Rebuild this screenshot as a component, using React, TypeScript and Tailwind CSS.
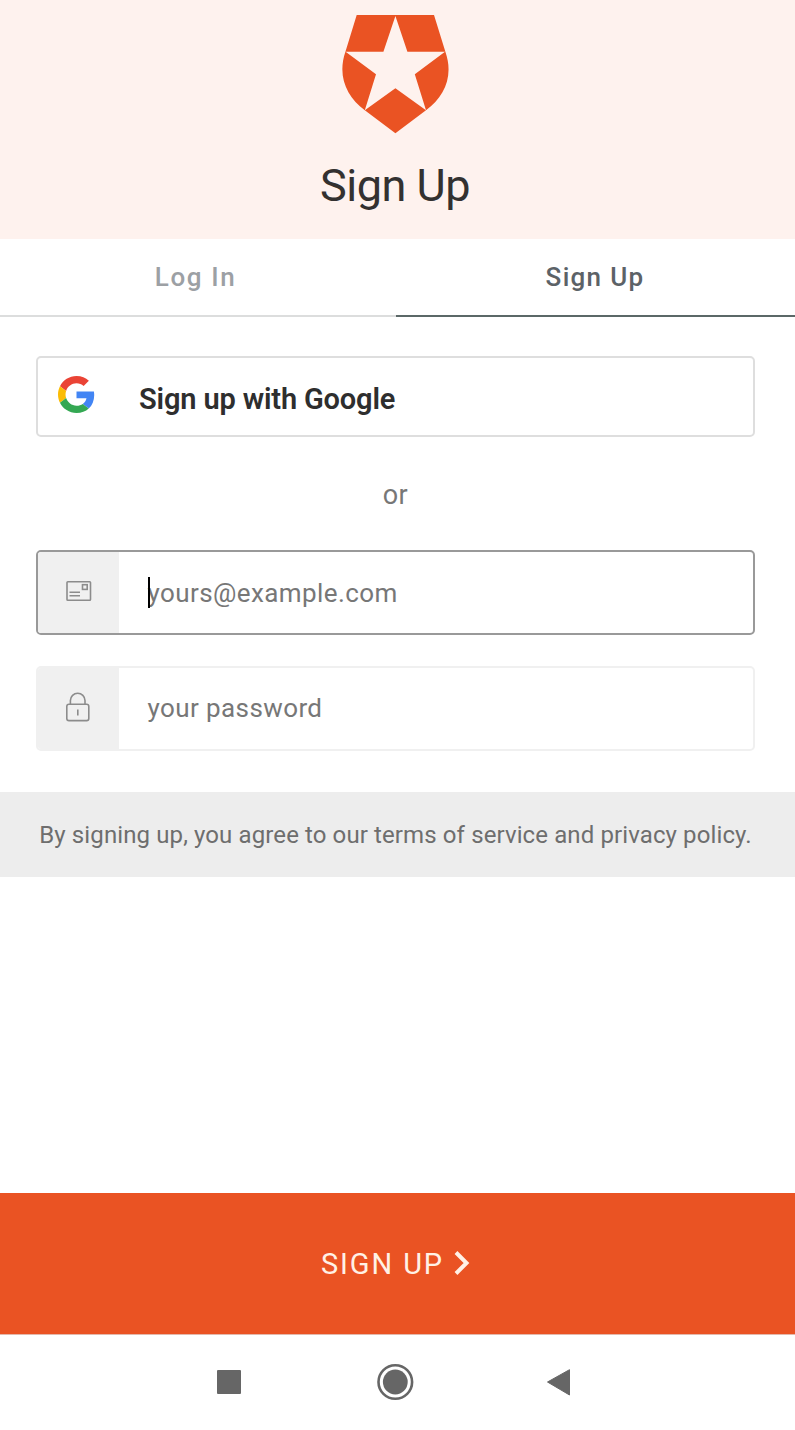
import React from "react";

function ShieldLogo() {
  return (
    <svg width="108" height="120" viewBox="341 14 108 120" className="block shrink-0">
      <path
        d="M356.7 15H434L445.3 51.5C454 76 444.5 96.5 426 110.3L395.4 133.3L364.8 110.3C346.5 96.5 337 76 345.5 51.5Z"
        fill="#ea5323"
      />
      <path
        d="M395.4 16L407.4 51.7H445L414.8 74.3L426 110.3L395.4 88.3L364.8 110.3L376 74.3L345.6 51.7H383.4Z"
        fill="#fef2ee"
      />
    </svg>
  );
}

function GoogleIcon() {
  return (
    <svg width="37" height="37" viewBox="0 0 48 48" preserveAspectRatio="none" className="block shrink-0">
      <path fill="#EA4335" d="M24 9.5c3.54 0 6.71 1.22 9.21 3.6l6.85-6.85C35.9 2.38 30.47 0 24 0 14.62 0 6.51 5.38 2.56 13.22l7.98 6.19C12.43 13.72 17.74 9.5 24 9.5z" />
      <path fill="#4285F4" d="M46.98 24.55c0-1.57-.15-3.09-.38-4.55H24v9.02h12.94c-.58 2.96-2.26 5.48-4.78 7.18l7.73 6c4.51-4.18 7.09-10.36 7.09-17.65z" />
      <path fill="#FBBC05" d="M10.53 28.59c-.48-1.45-.76-2.99-.76-4.59s.27-3.14.76-4.59l-7.98-6.19C.92 16.46 0 20.12 0 24c0 3.88.92 7.54 2.56 10.78l7.97-6.19z" />
      <path fill="#34A853" d="M24 48c6.48 0 11.93-2.13 15.89-5.81l-7.73-6c-2.15 1.45-4.92 2.3-8.16 2.3-6.26 0-11.57-4.22-13.47-9.91l-7.98 6.19C6.51 42.62 14.62 48 24 48z" />
    </svg>
  );
}

function MailIcon() {
  return (
    <svg width="26" height="22" viewBox="0 0 26 22" fill="none" stroke="#8c8c8c" strokeWidth="1.6" className="mb-[4px] block">
      <rect x="1" y="1.7" width="23.5" height="18.6" rx="0.8" />
      <rect x="16.5" y="4.7" width="4.7" height="4.7" />
      <path d="M3.5 12.2H14M3.5 15.8H14" />
    </svg>
  );
}

function LockIcon() {
  return (
    <svg width="26" height="30" viewBox="0 0 26 30" fill="none" stroke="#8c8c8c" strokeWidth="1.6" className="mb-[3px] mr-[1px] block">
      <rect x="1.8" y="12.2" width="22" height="16.4" rx="2.2" />
      <path d="M5.4 12V8.6C5.4 4.4 8.7 1.2 12.7 1.2S20 4.4 20 8.6V12M12.8 17.5V23.5" />
    </svg>
  );
}

export default function App() {
  return (
    <div className="flex h-[1430px] w-[795px] flex-col overflow-hidden bg-white font-['Roboto',sans-serif]">
      <header className="flex h-[239px] shrink-0 flex-col items-center bg-[#fef2ee] pr-[5px] pt-[14px]">
        <ShieldLogo />
        <h1 className="mt-[26px] text-[45px] leading-[52px] tracking-[-0.5px] text-[#333130]">Sign Up</h1>
      </header>

      <nav className="flex h-[78px] shrink-0 text-[26px] font-medium">
        <div className="flex w-[396px] items-center justify-center border-b-2 border-[#dcdddd] pr-[5px] tracking-[1.6px] text-[#9ca0a4]">
          Log In
        </div>
        <div className="flex flex-1 items-center justify-center border-b-2 border-[#5b6867] pr-[1px] tracking-[1.3px] text-[#5c6267]">
          Sign Up
        </div>
      </nav>

      <main className="flex flex-col pl-9 pr-[40px] pt-[39px]">
        <button className="flex h-[81px] items-center rounded-[5px] border-2 border-[#dedede] pl-[20px]">
          <span className="mb-[4px]">
            <GoogleIcon />
          </span>
          <span className="ml-[44px] mt-[7px] text-[29px] font-semibold tracking-[-0.15px] text-[#2e2e2e]">Sign up with Google</span>
        </button>

        <p className="mt-[38px] text-center text-[27px] leading-[40px] tracking-[0.4px] text-[#777]">or</p>

        <div className="mt-[35px] flex h-[85px] overflow-hidden rounded-[5px] border-2 border-[#999]">
          <div className="flex w-[81px] items-center justify-center bg-[#f0f0f0]">
            <MailIcon />
          </div>
          <div className="relative flex flex-1 items-center pl-[28.5px] pt-[1px] text-[26px] tracking-[0.4px] text-[#777]">
            yours@example.com
            <span className="absolute left-[29px] top-[25px] h-[31px] w-[2px] bg-black" />
          </div>
        </div>

        <div className="mt-[31px] flex h-[85px] overflow-hidden rounded-[5px] border-2 border-[#f0f0f0]">
          <div className="flex w-[81px] items-center justify-center bg-[#f0f0f0]">
            <LockIcon />
          </div>
          <div className="flex flex-1 items-center pl-[28.5px] text-[26px] tracking-[0.4px] text-[#777]">your password</div>
        </div>
      </main>

      <p className="mt-[41px] flex h-[85px] shrink-0 items-center justify-center whitespace-nowrap bg-[#ededed] pr-[4px] text-[24px] tracking-[0.11px] text-[#6e6e6e]">
        By signing up, you agree to our terms of service and privacy policy.
      </p>

      <button className="mt-auto flex h-[142px] shrink-0 items-center justify-center border-b border-[#e4b8ab] bg-[#ea5323] pr-[4px] text-[29px] tracking-[1.9px] text-[#fff1e6]">
        <span className="mt-[3px]">SIGN UP</span>
        <svg width="16" height="26" viewBox="0 0 16 26" fill="none" stroke="#fff1e6" strokeWidth="4" className="mb-[2px] ml-[10px]">
          <path d="M2 2.5L12.5 13L2 23.5" />
        </svg>
      </button>

      <div className="flex h-[95px] shrink-0 items-center justify-center pr-[5px]">
        <svg width="360" height="40" viewBox="215 1362 360 40" className="mb-[1px] block">
          <rect x="217" y="1370" width="24" height="24" rx="1" fill="#666" />
          <circle cx="395.3" cy="1382" r="16.8" fill="none" stroke="#666" strokeWidth="2.6" />
          <circle cx="395.3" cy="1382" r="12.4" fill="#666" />
          <path d="M547.5 1382L569.5 1369.7V1395Z" fill="#666" stroke="#666" strokeWidth="1" strokeLinejoin="round" />
        </svg>
      </div>
    </div>
  );
}
